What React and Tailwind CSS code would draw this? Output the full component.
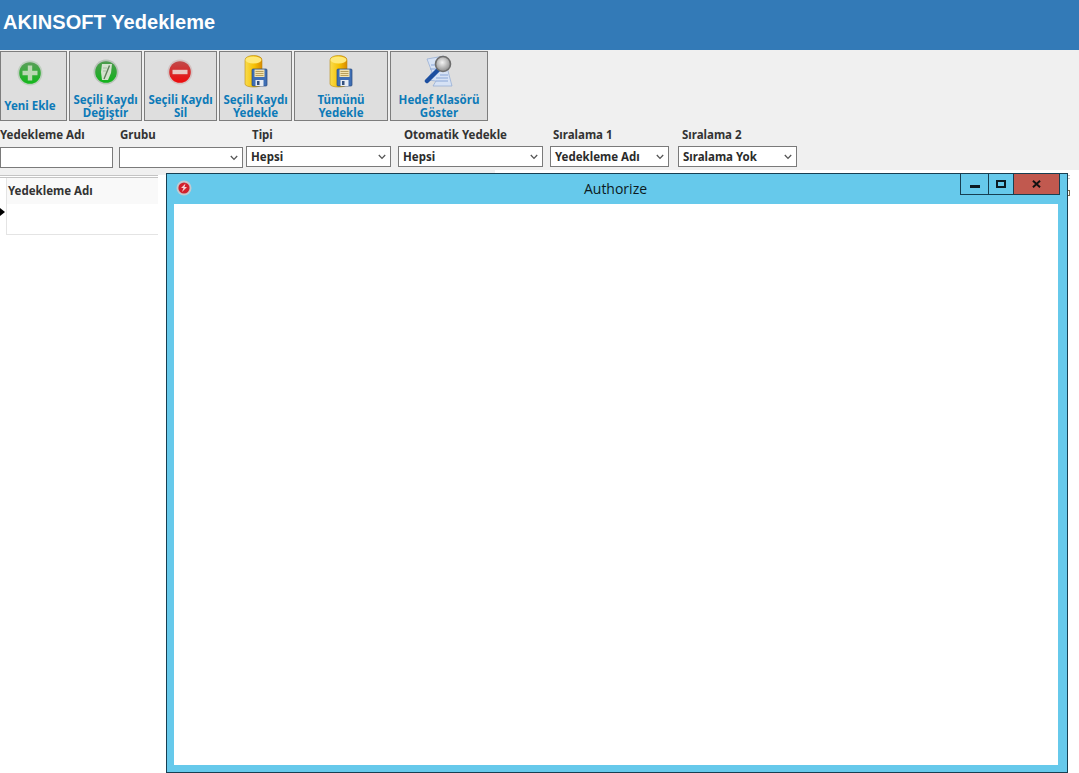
import React from "react";

const font = "font-['Noto_Sans','Open_Sans',sans-serif]";

const BallBase = ({ id, top, bottom, rim }) => (
  <>
    <defs>
      <linearGradient id={id} x1="0" x2="0" y1="0" y2="1">
        <stop offset="0%" stopColor={top} />
        <stop offset="100%" stopColor={bottom} />
      </linearGradient>
    </defs>
    <circle cx="13" cy="13" r="12.5" fill={rim} />
    <circle cx="13" cy="13" r="10.8" fill={`url(#${id})`} />
  </>
);

const PlusIcon = () => (
  <svg width="26" height="26" viewBox="0 0 26 26">
    <BallBase id="plusBall" top="#5a9f5a" bottom="#12b81a" rim="#bfcfbf" />
    <path d="M10.8 5.5h4.4v5.3h5.3v4.4h-5.3v5.3h-4.4v-5.3H5.5v-4.4h5.3z" fill="#bcd8b4" />
  </svg>
);

const EditIcon = () => (
  <svg width="26" height="26" viewBox="0 0 26 26">
    <BallBase id="editBall" top="#4f9a50" bottom="#10b41a" rim="#b9c2b9" />
    <path d="M9 5h10l-1 9-3 7H9l-1-8z" fill="#d4e2ce" />
    <path d="M16.5 6.5 11 20" stroke="#5f7f5a" strokeWidth="1.4" />
    <path d="M10 9h4M10 12h3" stroke="#a9bfa6" strokeWidth="1" />
  </svg>
);

const MinusIcon = () => (
  <svg width="26" height="26" viewBox="0 0 26 26">
    <BallBase id="minusBall" top="#c04a4a" bottom="#ee0a0c" rim="#d3c3c3" />
    <rect x="5.5" y="10.8" width="15" height="4.4" fill="#e8c8c4" />
  </svg>
);

const DbIcon = ({ id }) => (
  <svg width="24" height="34" viewBox="0 0 24 34">
    <defs>
      <linearGradient id={id} x1="0" x2="1" y1="0" y2="0">
        <stop offset="0%" stopColor="#f9dc4e" />
        <stop offset="55%" stopColor="#f6c000" />
        <stop offset="100%" stopColor="#d98a00" />
      </linearGradient>
    </defs>
    <path d="M1 5c0-6 17-6 17 0v24c0 4-17 4-17 0z" fill={`url(#${id})`} stroke="#b98a10" strokeWidth="0.6" />
    <ellipse cx="9.5" cy="5" rx="8" ry="3.4" fill="#ffe978" />
    <rect x="8" y="14" width="15" height="17" rx="1" fill="#3f6fb5" stroke="#26477c" strokeWidth="0.7" />
    <rect x="10.5" y="14.5" width="10" height="7.5" fill="#f2e3b0" />
    <path d="M11.5 16.5h8M11.5 18.5h8M11.5 20.5h8" stroke="#a98e45" strokeWidth="0.8" />
    <rect x="11.5" y="25" width="8" height="6" fill="#e6ebf2" />
    <rect x="13" y="26" width="2.5" height="4" fill="#33517f" />
  </svg>
);

const SearchDocIcon = () => (
  <svg width="30" height="32" viewBox="0 0 30 32">
    <defs>
      <radialGradient id="lens" cx="45%" cy="40%" r="60%">
        <stop offset="0%" stopColor="#f4f4f4" />
        <stop offset="100%" stopColor="#8d8d8d" />
      </radialGradient>
    </defs>
    <path d="M3 4 20 1l8 30-19 0 3-5-9-1 5-8z" fill="#d6e2f5" stroke="#8fa9d3" strokeWidth="0.7" />
    <path d="M7 10h8M6 14h7M12 23h12M12 26h12M16 20h8" stroke="#8aa6d6" strokeWidth="1" />
    <path d="M14 15 3 26" stroke="#1d4fa0" strokeWidth="4.5" strokeLinecap="round" />
    <circle cx="19" cy="9" r="7.5" fill="url(#lens)" stroke="#6d6d6d" strokeWidth="1.6" />
  </svg>
);

const Chevron = () => (
  <svg width="8" height="6" viewBox="0 0 8 6" className="shrink-0">
    <path d="M0.8 1 4 4.4 7.2 1" fill="none" stroke="#555" strokeWidth="1.3" />
  </svg>
);

const ToolButton = ({ width, icon, lines, iconOffset, pad = "" }) => (
  <button className={`${width} ${pad} h-[70px] shrink-0 flex flex-col items-center border border-[#7d7d7d] bg-[#dedede] text-[#0d7ab8] text-[11.5px] leading-[13px] font-bold`}>
    <span className={`h-[41px] shrink-0 flex justify-center ${iconOffset}`}>{icon}</span>
    {lines.length === 1 && <span className="h-[6px] shrink-0" />}
    {lines.map((line) => (
      <span key={line} className="whitespace-nowrap">{line}</span>
    ))}
  </button>
);

const SelectBox = ({ value, width }) => (
  <div className={`${width} h-[21px] flex items-center justify-between pl-[4px] pr-[4px] border border-[#7a7a7a] bg-white text-[11.5px] font-bold text-[#2b2b2b]`}>
    <span className="whitespace-nowrap">{value}</span>
    <Chevron />
  </div>
);

const Filter = ({ label, labelPad, className, children }) => (
  <div className={`flex flex-col shrink-0 ${className}`}>
    <span className={`h-[22px] pt-[6px] leading-[14px] text-[11.5px] font-bold text-[#333] whitespace-nowrap ${labelPad}`}>{label}</span>
    {children}
  </div>
);

const AuthorizeWindow = () => (
  <div className="absolute left-[166px] top-[173px] w-[902px] h-[600px] flex flex-col border border-[#173f52] bg-[#66c9eb] font-['Open_Sans',sans-serif]">
    <div className="relative h-[30px] flex items-center justify-center shrink-0">
      <svg width="16" height="16" viewBox="0 0 16 16" className="absolute left-[9px] top-[6px]">
        <circle cx="8" cy="8" r="7.5" fill="#c3c9d0" />
        <circle cx="8" cy="8" r="5.6" fill="#d2202c" />
        <path d="M9.5 3.5 5 8h2.5L6 12l5-5H8.5z" fill="#f5d5d8" />
      </svg>
      <span className="text-[14px] text-[#0c1a22] pr-[3px] mb-px">Authorize</span>
      <div className="absolute right-[7px] top-0 h-[21px] flex border-x border-b border-[#173f52]">
        <div className="w-[28px] flex items-center justify-center border-r border-[#173f52]">
          <span className="block w-[10px] h-[3px] mt-[4px] bg-[#0c1a22]" />
        </div>
        <div className="w-[25px] flex items-center justify-center border-r border-[#173f52]">
          <span className="block w-[10px] h-[8px] border-2 border-[#0c1a22]" />
        </div>
        <div className="w-[45px] flex items-center justify-center bg-[#c1594f]">
          <svg width="9" height="8" viewBox="0 0 10 9">
            <path d="M1 .8 9 8.2M9 .8 1 8.2" stroke="#111" strokeWidth="2.2" />
          </svg>
        </div>
      </div>
    </div>
    <div className="flex-1 ml-[7px] mr-[9px] mb-[7px] bg-white" />
  </div>
);

const App = () => {
  return (
    <div className={`relative w-[1079px] h-[773px] overflow-hidden bg-white ${font}`}>
      <header className="h-[50px] flex items-center pl-[3px] pb-[6px] bg-[#337ab7] font-['Liberation_Sans',sans-serif] text-[20px] font-bold text-white tracking-[0.08px]">
        AKINSOFT Yedekleme
      </header>

      <div className="h-[120px] bg-[#f0f0f0]">
        <div className="flex gap-[2px] pt-px h-[72px]">
          <ToolButton width="w-[67px]" pad="pr-[7px]" icon={<PlusIcon />} iconOffset="pt-[8px]" lines={["Yeni Ekle"]} />
          <ToolButton width="w-[73px]" icon={<EditIcon />} iconOffset="pt-[7px]" lines={["Seçili Kaydı", "Değiştir"]} />
          <ToolButton width="w-[73px]" icon={<MinusIcon />} iconOffset="pt-[7px] pr-[1px]" lines={["Seçili Kaydı", "Sil"]} />
          <ToolButton width="w-[73px]" icon={<DbIcon id="dbOne" />} iconOffset="pt-[3px]" lines={["Seçili Kaydı", "Yedekle"]} />
          <ToolButton width="w-[94px]" icon={<DbIcon id="dbTwo" />} iconOffset="pt-[3px]" lines={["Tümünü", "Yedekle"]} />
          <ToolButton width="w-[98px]" icon={<SearchDocIcon />} iconOffset="pt-[3px]" lines={["Hedef Klasörü", "Göster"]} />
        </div>

        <div className="flex">
          <Filter label="Yedekleme Adı" className="w-[113px]">
            <input className="w-[113px] h-[21px] mt-[3px] border border-[#7a7a7a] bg-white" />
          </Filter>
          <Filter label="Grubu" labelPad="pl-px" className="ml-[6px] w-[124px]">
            <div className="mt-[3px]"><SelectBox value="" width="w-[124px]" /></div>
          </Filter>
          <Filter label="Tipi" labelPad="pl-[6px]" className="ml-[3px] w-[145px]">
            <div className="mt-[2px]"><SelectBox value="Hepsi" width="w-[145px]" /></div>
          </Filter>
          <Filter label="Otomatik Yedekle" labelPad="pl-[6px]" className="ml-[7px] w-[145px]">
            <div className="mt-[2px]"><SelectBox value="Hepsi" width="w-[145px]" /></div>
          </Filter>
          <Filter label="Sıralama 1" labelPad="pl-[3px]" className="ml-[7px] w-[119px]">
            <div className="mt-[2px]"><SelectBox value="Yedekleme Adı" width="w-[119px]" /></div>
          </Filter>
          <Filter label="Sıralama 2" labelPad="pl-[4px]" className="ml-[9px] w-[119px]">
            <div className="mt-[2px]"><SelectBox value="Sıralama Yok" width="w-[119px]" /></div>
          </Filter>
        </div>
      </div>

      <div className="w-[495px] h-[5px] bg-[#f0f0f0]" />
      <div className="w-[158px] h-[3px] border-y border-[#c4c4c4] bg-white" />
      <div className="ml-[6px] w-[152px] h-[57px] border-l border-b border-[#e4e4e4]">
        <div className="h-[26px] pl-px pt-[6px] bg-[#f9f9f9] text-[11.5px] leading-[14px] font-bold text-[#333]">
          Yedekleme Adı
        </div>
      </div>
      <span className="absolute left-0 top-[208px] w-0 h-0 border-y-[4px] border-l-[5px] border-y-transparent border-l-black" />

      {/* bits of the grid behind the window that still show on its right */}
      <span className="absolute left-[1068px] top-[175px] w-[2px] h-[4px] border-y border-[#c4c4c4]" />
      <span className="absolute left-[1068px] top-[190px] w-[2px] h-[6px] border-y border-r border-[#7a6a4a]" />

      <AuthorizeWindow />
    </div>
  );
};

export default App;
